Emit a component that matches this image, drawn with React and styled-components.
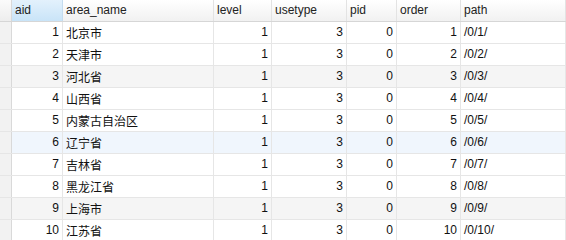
import React from "react";
import styled, { createGlobalStyle, css } from "styled-components";

const GlobalStyle = createGlobalStyle`
  html, body {
    margin: 0;
    padding: 0;
    background: #ffffff;
    overflow: hidden;
  }
`;

const columns = [
  { key: "aid", label: "aid", width: 51, align: "right", active: true },
  { key: "area_name", label: "area_name", width: 151, align: "left" },
  { key: "level", label: "level", width: 58, align: "right" },
  { key: "usetype", label: "usetype", width: 75, align: "right" },
  { key: "pid", label: "pid", width: 50, align: "right" },
  { key: "order", label: "order", width: 64, align: "right" },
  { key: "path", label: "path", width: 0, align: "left" },
];

const names = [
  "北京市",
  "天津市",
  "河北省",
  "山西省",
  "内蒙古自治区",
  "辽宁省",
  "吉林省",
  "黑龙江省",
  "上海市",
  "江苏省",
];

const rows = names.map((name, i) => ({
  aid: i + 1,
  area_name: name,
  level: 1,
  usetype: 3,
  pid: 0,
  order: i + 1,
  path: `/0/${i + 1}/`,
}));

// rows that show the grey band in the grid, and the current row
const shaded = [3, 9];
const current = 6;

const template = `12px ${columns
  .map((c) => (c.width ? `${c.width}px` : "1fr"))
  .join(" ")}`;

function App() {
  return (
    <>
      <GlobalStyle />
      <Grid>
        <HeadRow>
          <Indicator head />
          {columns.map((c) => (
            <HeadCell key={c.key} active={c.active}>
              {c.label}
            </HeadCell>
          ))}
        </HeadRow>
        {rows.map((r) => (
          <Row
            key={r.aid}
            tone={
              r.aid === current ? "current" : shaded.includes(r.aid) ? "grey" : "plain"
            }
          >
            <Indicator />
            {columns.map((c) => (
              <Cell key={c.key} align={c.align}>
                {r[c.key]}
              </Cell>
            ))}
          </Row>
        ))}
      </Grid>
    </>
  );
}

const Grid = styled.div`
  width: 566px;
  height: 240px;
  overflow: hidden;
  font-family: "Liberation Sans", "Noto Sans CJK SC", sans-serif;
  font-size: 12px;
  color: #111;
`;

const HeadRow = styled.div`
  display: grid;
  grid-template-columns: ${template};
  height: 22px;
  background: linear-gradient(#ffffff, #f1f1f1);
  border-bottom: 1px solid #d6d6d6;
  box-sizing: border-box;
`;

const Row = styled.div`
  display: grid;
  grid-template-columns: ${template};
  height: 22px;
  box-sizing: border-box;
  border-bottom: 1px solid #e6e6e6;
  background: #ffffff;

  ${(p) =>
    p.tone === "grey" &&
    css`
      background: #f5f5f5;
    `}
  ${(p) =>
    p.tone === "current" &&
    css`
      background: #f0f6fd;
    `}
`;

const Indicator = styled.div`
  background: ${(p) => (p.head ? "linear-gradient(#fbfbfb, #ededed)" : "#f2f2f2")};
  border-right: 1px solid #d9d9d9;
`;

const HeadCell = styled.div`
  display: flex;
  align-items: center;
  padding: 0 3px 1px 3px;
  border-right: 1px solid #e3e3e3;
  white-space: nowrap;
  overflow: hidden;
  color: #222;

  ${(p) =>
    p.active &&
    css`
      background: linear-gradient(#e3f1fc, #c9e4f8);
      border-right-color: #c4dcef;
    `}
`;

const Cell = styled.div`
  display: flex;
  align-items: center;
  justify-content: ${(p) => (p.align === "right" ? "flex-end" : "flex-start")};
  padding: 0 3px 1px 3px;
  border-right: 1px solid #e6e6e6;
  white-space: nowrap;
  overflow: hidden;
`;

export default App;
